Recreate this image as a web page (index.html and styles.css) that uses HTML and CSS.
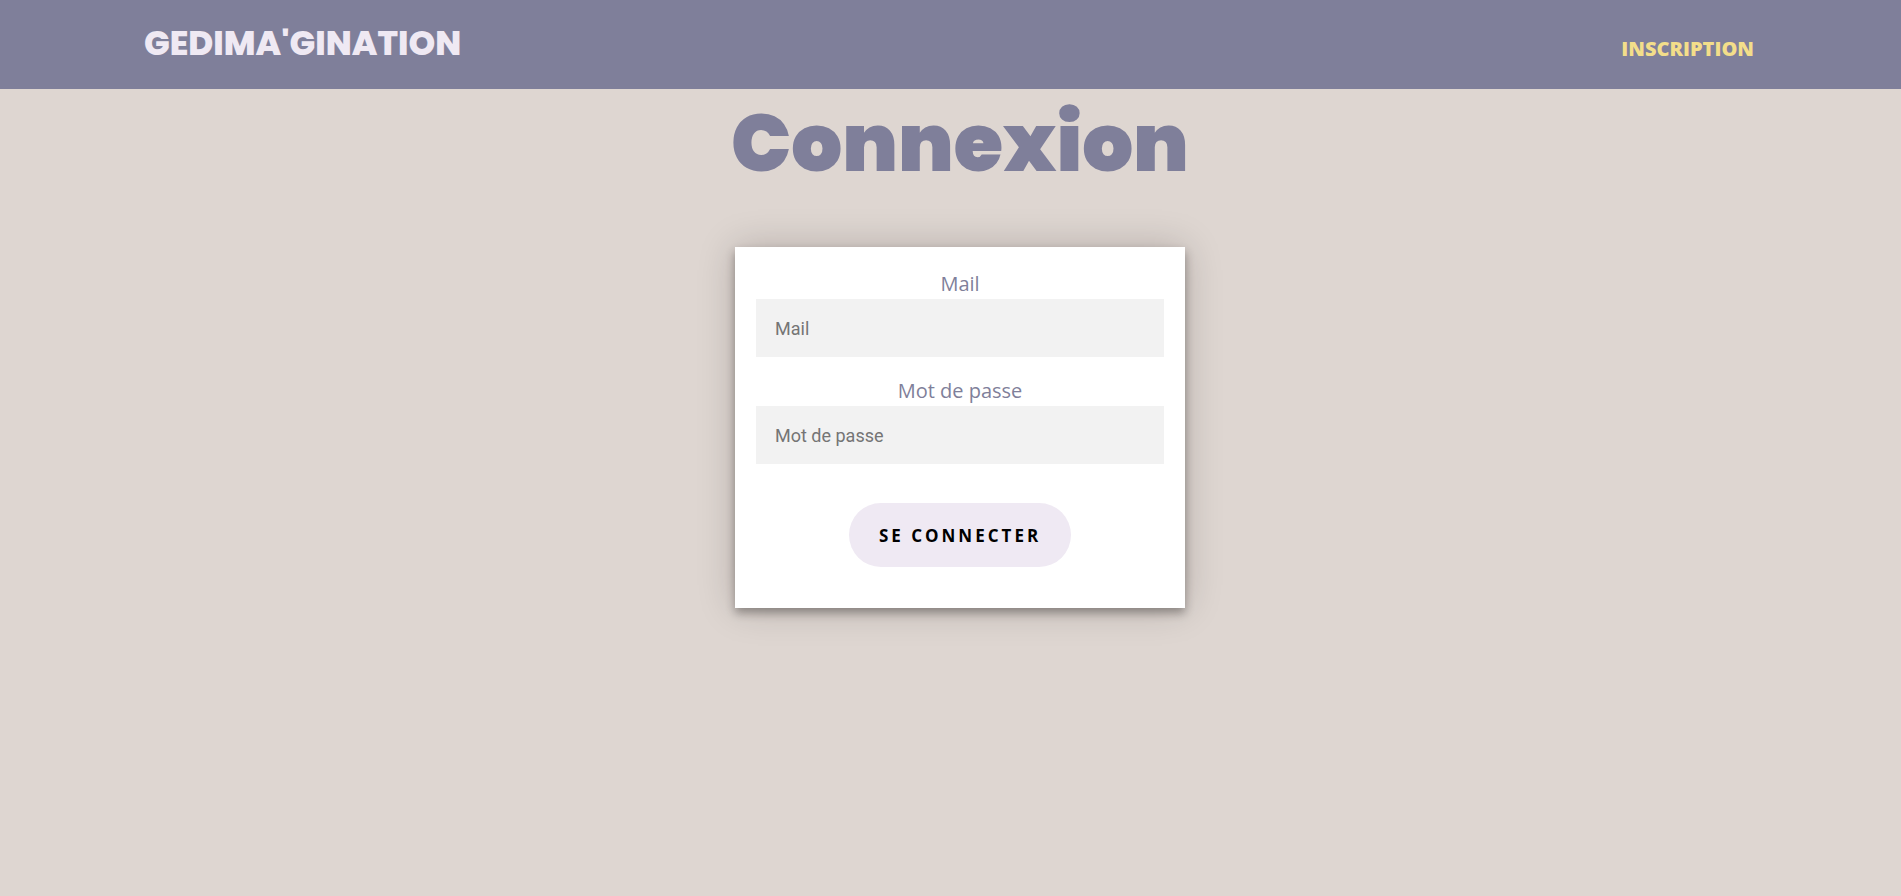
FILE: index.html
```
<!DOCTYPE html>
<html lang="fr">
<head>
  <meta charset="utf-8">
  <meta name="viewport" content="width=device-width, initial-scale=1">
  <title>Gedima'gination - Connexion</title>
  <link rel="stylesheet" href="styles.css">
</head>
<body>
  <header class="navbar">
    <a class="brand" href="#">GEDIMA'GINATION</a>
    <nav class="menu">
      <a class="menu-link" href="#">INSCRIPTION</a>
    </nav>
  </header>
  <main class="login">
    <h1 class="title">Connexion</h1>
    <form class="card">
      <div class="field">
        <label class="label" for="mail">Mail</label>
        <input class="input" id="mail" type="email" placeholder="Mail">
      </div>
      <div class="field">
        <label class="label" for="password">Mot de passe</label>
        <input class="input" id="password" type="password" placeholder="Mot de passe">
      </div>
      <button class="submit" type="submit">SE CONNECTER</button>
    </form>
  </main>
</body>
</html>
```

FILE: styles.css
```
* {
  box-sizing: border-box;
}

body {
  margin: 0;
  min-height: 100vh;
  background: #ded6d1;
  color: #7f7f9a;
  font-family: "Open Sans", sans-serif;
}

.navbar {
  display: flex;
  justify-content: space-between;
  align-items: center;
  padding: 19px 147px 21px 144px;
  background: #7f7f9a;
}

.brand {
  color: #efe9f3;
  font-family: Poppins, Inter, sans-serif;
  font-size: 34px;
  font-weight: 800;
  line-height: 49px;
  text-decoration: none;
}

.menu {
  padding-top: 10px;
}

.menu-link {
  color: #f3de8a;
  font-size: 20px;
  font-weight: 800;
  text-decoration: none;
}

.login {
  display: flex;
  flex-direction: column;
  align-items: center;
  padding-left: 1%;
}

.title {
  margin: 0 0 50px;
  font-family: Poppins, Inter, sans-serif;
  font-size: 80px;
  font-weight: 900;
  line-height: 108px;
}

.card {
  display: flex;
  flex-direction: column;
  align-items: center;
  width: 100%;
  max-width: 450px;
  padding: 22px 21px 41px;
  background: #fff;
  box-shadow: 0 0 36px rgba(20, 0, 10, 0.2), 0 5px 9px rgba(0, 0, 0, 0.32);
}

.field {
  display: flex;
  flex-direction: column;
  width: 100%;
  margin-bottom: 19px;
}

.label {
  font-size: 20px;
  line-height: 30px;
  text-align: center;
}

.input {
  width: 100%;
  height: 58px;
  padding: 0 19px;
  border: 0;
  background: #f2f2f2;
  font-family: Roboto, sans-serif;
  font-size: 18px;
}

.submit {
  height: 64px;
  margin-top: 20px;
  padding: 0 30px;
  border: 0;
  border-radius: 32px;
  background: #efe9f3;
  color: #000;
  font-family: "Open Sans", sans-serif;
  font-size: 17px;
  font-weight: 700;
  letter-spacing: 3px;
}
```
